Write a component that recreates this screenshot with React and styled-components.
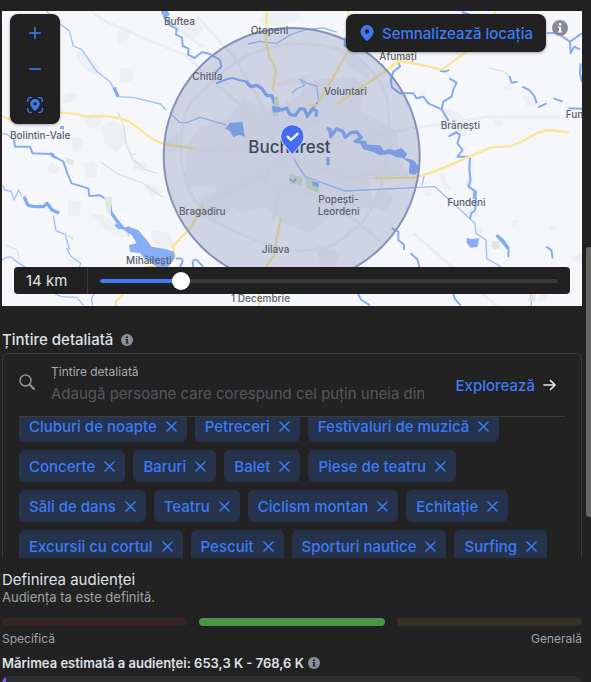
import React, { useState } from "react";
import styled, { createGlobalStyle } from "styled-components";

const Global = createGlobalStyle`
  * { box-sizing: border-box; }
  body {
    margin: 0;
    background: #222222;
    color: #dfe1e5;
    font-family: Inter, "Liberation Sans", sans-serif;
  }
  button, input { font: inherit; }
`;

const Page = styled.div`
  display: flex;
  height: 100vh;
  overflow: hidden;
`;

const Content = styled.main`
  flex: 1;
  min-width: 0;
  padding: 11px 4px 0 2px;
`;

const ScrollRail = styled.div`
  width: 5px;
  display: grid;
  grid-template-rows: 247fr 270fr 165fr;
`;

const ScrollThumb = styled.div`
  grid-row: 2;
  background: #666667;
  border-radius: 3px 0 0 3px;
`;

const MapFrame = styled.section`
  position: relative;
  height: 295px;
  overflow: hidden;
  background: #f6f7fa;
`;

const MapDrawing = styled.svg`
  display: block;
  width: 100%;
  height: 100%;
  font-family: Inter, sans-serif;
`;

const ZoomPanel = styled.div`
  position: absolute;
  top: 3px;
  left: 8px;
  display: flex;
  flex-direction: column;
  width: 50px;
  padding: 1px 0;
  border-radius: 8px;
  background: #212121;
  box-shadow: 0 1px 3px rgba(0, 0, 0, 0.35);
`;

const ZoomButton = styled.button`
  display: grid;
  place-items: center;
  height: 36px;
  padding: 0;
  border: 0;
  background: none;
  color: #3d7bf7;
`;

const MapActions = styled.div`
  position: absolute;
  top: 3px;
  right: 14px;
  display: flex;
  gap: 6px;
`;

const PinButton = styled.button`
  display: flex;
  align-items: center;
  gap: 7px;
  height: 38px;
  padding: 0 13px;
  border: 0;
  border-radius: 8px;
  background: #212121;
  color: #3d7bf7;
  font-size: 15px;
  font-weight: 500;
  white-space: nowrap;
  box-shadow: 0 1px 3px rgba(0, 0, 0, 0.35);
`;

const InfoSpot = styled.span`
  display: flex;
  padding-top: 6px;
`;

const RadiusBar = styled.div`
  position: absolute;
  left: 12px;
  right: 12px;
  bottom: 12px;
  display: flex;
  align-items: center;
  height: 27px;
  border-radius: 4px;
  background: #212121;
`;

const RadiusValue = styled.label`
  flex: none;
  width: 74px;
  padding-left: 12px;
  border-right: 1px solid #38393b;
  color: #dfe1e5;
  font-size: 15px;
  line-height: 27px;
`;

const Slider = styled.input`
  flex: 1;
  min-width: 0;
  height: 18px;
  margin: 0 12px;
  appearance: none;
  background: none;

  &::-webkit-slider-runnable-track {
    height: 4px;
    border-radius: 2px;
    background: linear-gradient(to right, #3d7bf7 var(--fill), #393a3c var(--fill));
  }
  &::-webkit-slider-thumb {
    appearance: none;
    width: 18px;
    height: 18px;
    margin-top: -7px;
    border-radius: 50%;
    background: #ffffff;
  }
`;

const Heading = styled.h2`
  display: flex;
  align-items: center;
  gap: 8px;
  margin: 0;
  padding: 24px 0 3px;
  font-size: 15px;
  font-weight: 500;
  line-height: 20px;
`;

const TargetBox = styled.section`
  height: 205px;
  padding: 0 16px;
  overflow: hidden;
  border: 1px solid #393a3c;
  border-bottom: 0;
  border-radius: 6px 6px 0 0;
`;

const SearchRow = styled.div`
  display: flex;
  align-items: center;
  height: 63px;
  border-bottom: 1px solid #3c3d3f;
  color: #8f939d;
`;

const SearchIcon = styled.svg`
  flex: none;
  margin-bottom: 6px;
`;

const SearchField = styled.label`
  display: flex;
  flex: 1;
  flex-direction: column;
  min-width: 0;
  margin: 0 32px 0 16px;
  color: #a9abb0;
  font-size: 12px;
  line-height: 16px;
`;

const SearchInput = styled.input`
  width: 100%;
  height: 26px;
  padding: 0;
  border: 0;
  outline: 0;
  background: none;
  color: #dfe1e5;
  font-size: 15px;
  &::placeholder { color: #55585f; }
`;

const ExploreButton = styled.button`
  display: flex;
  align-items: center;
  gap: 8px;
  padding: 0 9px 0 0;
  border: 0;
  background: none;
  color: #3d7bf7;
  font-size: 15px;
  font-weight: 500;
`;

const TagViewport = styled.div`
  height: 141px;
  overflow: hidden;
`;

const TagList = styled.ul`
  display: flex;
  flex-wrap: wrap;
  gap: 8px;
  margin: -7px 0 0;
  padding: 0;
  list-style: none;
`;

const Tag = styled.li`
  display: flex;
  align-items: center;
  gap: 9px;
  height: 32px;
  padding: 0 10px;
  border-radius: 6px;
  background: #26334d;
  color: #3d7bf7;
  font-size: 15px;
  font-weight: 500;
  white-space: nowrap;
`;

const RemoveButton = styled.button`
  display: flex;
  padding: 0;
  border: 0;
  background: none;
  color: inherit;
`;

const Audience = styled.section`
  padding-top: 12px;
`;

const AudienceTitle = styled.h2`
  margin: 0;
  font-size: 15px;
  font-weight: 400;
  line-height: 20px;
`;

const AudienceNote = styled.p`
  margin: 0;
  color: #a0a2a7;
  font-size: 13px;
  line-height: 15px;
`;

const Meter = styled.div`
  display: grid;
  grid-template-columns: repeat(3, 1fr);
  gap: 12px;
  margin-top: 13px;
`;

const Segment = styled.span`
  height: 8px;
  border-radius: 4px;
  background: ${(p) => p.$color};
`;

const MeterLabels = styled.div`
  display: flex;
  justify-content: space-between;
  margin-top: 4px;
  color: #a0a2a7;
  font-size: 12px;
  line-height: 18px;
`;

const Estimate = styled.p`
  display: flex;
  align-items: center;
  gap: 4px;
  margin: 6px 0 4px;
  font-size: 13px;
  font-weight: 600;
  line-height: 18px;
`;

const NextPanel = styled.div`
  height: 48px;
  border-radius: 8px;
  background: linear-gradient(to right, #8a5cf5 4px, #2e2f31 4px);
`;

function InfoIcon({ size = 12, color = "#8b8f9c" }) {
  return (
    <svg width={size} height={size} viewBox="0 0 12 12" aria-hidden="true">
      <circle cx="6" cy="6" r="6" fill={color} />
      <path d="M5 2.4h2v1.7H5zM4.5 5h2.4v3.4h.8v1H4.4v-1h.9V6h-.8z" fill={size > 12 ? "#f4f5f8" : "#222"} />
    </svg>
  );
}

function CrossIcon() {
  return (
    <svg width="11" height="11" viewBox="0 0 11 11" aria-hidden="true">
      <path d="M1 1l9 9M10 1l-9 9" stroke="currentColor" strokeWidth="1.5" strokeLinecap="round" />
    </svg>
  );
}

const pinPath = "M8 0a6.5 6.5 0 0 0-6.5 6.5C1.5 10 4.5 12.8 7.1 15.6q.9.8 1.8 0C11.5 12.8 14.5 10 14.5 6.5A6.5 6.5 0 0 0 8 0zm0 4.2a2.300 2.300 0 1 1 0 4.600 2.300 2.300 0 0 1 0-4.600z";

const urban = [
  "M355 92l22 2 14 8-10 20-16 12-14-10zM362 205h26l14 12-4 22-20 12-20-14zM228 160l22-6 24 22 26 28-8 22-28-14-24-20zM250 350l36-10 22 14-12 24-30 10zM300 378l42-16 30 22 8 46-34 26-32-28zM190 284l22-8 20 12-18 18-26 6zM215 410l34 6-4 36-26 4zM250 490l28-6 16 14-6 34-30 4zM205 600l40 8-6 42-36-4zM265 640l48 6 34 26 30 40-28-4-40-24zM150 485l32 16-16 22-26-10zM200 780l34-10 16 12-32 14zM510 60h76l26 30-30 24-48-24zM425 550l40 6 22 22-28 12zM400 480l40 10-10 28-30-8zM450 690l60 10 14 40-20 10-40-14z",
  "M788 34h110v24l-80 24-42-16zM1260 272l20-4-8 18-18 4zM1510 260l20-6 4 16-20 4zM1568 290l34-6 14 30-32 10zM1325 322l50 14 28 30-8 46-34-22-36-36zM1482 360l24-4 4 20-24 4zM1270 570l22-4 4 20-20 4zM1314 518l20 10 20 44-20-4zM1385 602l36 2 16 46-38-2zM1430 680l20 2-6 20-18-4zM1534 658l22 4v18l-20 4zM1650 674l16 6v12l-16-2zM1716 768l30-10v36l-28-12zM1620 880l26 6-10 22-20-6z",
];
const city = "M560 440L600 380L690 350L730 290L800 330L880 300L940 240L1060 230L1100 260L1080 330L1190 390L1200 500L1110 540L1120 620L1000 640L930 700L850 670L800 620L720 640L640 560L560 560z";
const suburbs = "M600 590L660 570L700 620L650 670L590 650zM950 740L1020 754L1000 814L960 800zM830 250L930 220L920 245L830 262zM1010 150L1090 190L1110 240L1050 200zM1160 490L1210 490L1230 530L1150 525zM1150 560L1180 590L1160 640L1120 620zM640 380L700 370L710 400L660 420zM500 420L540 400L530 450L500 460z";
const roads = [
  "M272 30q24 26 60 40l140 62 80 30 66 60 70 30M590 48l110 120 60 100 100 180M500 60q60 50 110 80M860 300l18 60 2 110",
  "M552 350q10-40 70-90 70-70 130-96 100-50 246-22 80 26 104 58 44 40 60 100 14 100-4 180-20 160-110 220-60 60-180 50-100-20-230-90-40-30-70-90-40-80-16-220",
  "M727 446l20-44 90-16 50 0 80-24M580 450l148-3 120-6M860 470l-80 60-160 78M850 454l-60 90M880 480v90M860 450l50 70M880 480h66l8 20-8 40M860 548l120 56 90 60 70 60M850 454l-140-150-60-50M950 500l90 34 200-14M944 354l-90 100M1110 410l130-26 90-12 134-22h282M840 560l-20 100M1240 700l140 120 110 98",
];
const yellow = [
  "M6 348l30 14M180 338q40 0 80 12 50-4 84 2c70 8 80 60 148 80l94 14M348 918v-14l26-26M436 802l62-10 27-22-7-30 56-60 36-66",
  "M800 33l-2 90 10 50q20 20 18 50l-8 50M1045 33v120l-90 156M1230 163l-220 150M1400 155l-74 54-42-10-40-8-50-8-20 16M1480 44l8-10M1122 536l120-4q50-10 120-42l110-48 60-4c60-18 70-46 120-48l56 8M796 802l26-34 10-60 10-54M778 918v-40M922 315h30",
];
const rivers = [
  "M140 33L180 72L208 92L220 138L245 148L290 214L330 245L354 290L398 292L440 302L482 312L498 330M6 400L20 402L42 420M8 555L14 570L34 574L42 600L56 570L66 588M6 780Q30 760 46 782L76 802M200 744L212 768L242 790L238 802M165 882L185 890L230 892L250 916M278 916Q270 890 284 882M160 646L168 692L196 704L208 750",
  "M744 132L780 124L830 130L872 104L920 88L970 84L1010 96M510 340L540 368L560 368L600 352L680 375M875 280L895 264L914 256L900 238L922 250L950 258L956 304M880 475L915 530L1035 573L1305 560L1425 670L1428 700L1458 720L1460 775L1502 800M1274 520L1266 556M1594 882v36",
];
const streams = [
  "M42 420L45 440L90 440L98 460L150 462L190 485L202 520L215 550L265 565L268 588L300 586L330 605L335 640L350 660L370 686L390 682",
  "M490 46L510 76L530 86L528 104L546 112L548 138L566 146L564 164L584 174L606 156L630 162L660 180L664 200L650 214L644 226M648 250L680 238L698 234L716 240L736 244L752 260L770 256L786 266L800 286L816 288L828 320M1036 112L1034 136L1046 146M956 304L936 326L920 354",
  "M1195 185L1200 200L1180 215L1172 240L1176 262L1200 280L1240 280L1250 295L1270 290L1285 310L1325 328L1345 362M1348 235L1370 248L1360 268L1355 290L1330 305L1325 328M1370 398L1348 408L1368 396L1380 405L1372 430L1388 450L1372 470L1410 470L1408 510L1412 540L1405 560L1428 575L1426 630L1414 640L1410 658",
  "M1528 228L1535 248L1553 245M1567 260L1588 270L1604 290L1610 310M1615 322L1640 310M1660 295L1688 305M1705 325L1746 326M1640 100L1670 98L1710 125L1712 160L1722 140L1740 148M1710 125L1746 100M1742 190L1740 220L1746 246M1385 36L1410 44M1175 685L1195 695L1195 720L1212 734L1212 750M1232 760L1252 778L1258 800M1490 705L1510 720L1526 745L1525 772M1638 740L1654 750L1658 775M1360 882L1364 896L1382 916M1074 882L1084 900L1110 916M580 800Q574 776 590 780L600 790L610 800M528 776Q560 770 540 800M1320 212Q1334 218 1348 210",
];
const wideStreams = "M738 244L752 260L770 256L786 266L800 286L816 288L828 322L846 330L860 324L870 344L886 346L900 326L914 328L922 348L938 326L950 334L948 350M980 385L990 388L992 410L1010 386L1028 394L1036 412L1052 398L1070 396L1084 412L1066 424L1100 428M72 590L84 616L104 620L130 620L142 610L156 630L178 640M335 640L350 662L370 686M342 262L354 290M1490 705L1525 745M984 472V496";
const lakes = [
  "M484 33h20l6 12-14 8-12-12zM390 682L415 690L440 720L455 740L500 748L522 755L525 775L505 800L470 800L430 772L420 760L390 755L387 735L410 730L395 705L370 690zM342 676L356 668L370 686L356 688zM676 386L690 368L728 366L732 396L736 410L716 404L700 412L690 394zM816 318L838 322L842 336L818 338zM1400 713l12 4 26-2-6 26-20 2-12-14zM1420 568l8 4v26l-10-2zM150 456l12 4 4 18-12-8zM180 378h12v10h-12z",
  "M1080 430L1110 434L1140 436L1152 452L1170 446L1182 452L1204 444L1222 462L1214 474L1240 480L1256 500L1258 514L1244 524L1226 520L1230 490L1208 474L1190 472L1170 462L1140 466L1120 456L1090 448z",
];
const labels = [
  ["Buftea", 492, 75], ["Bolintin-Vale", 30, 418], ["Otopeni", 752, 102], ["Chitila", 577, 239],
  ["Voluntari", 972, 286], ["Afumați", 1138, 181], ["Brănești", 1322, 387], ["Fun", 1697, 354],
  ["Bragadiru", 537, 644], ["Popești-", 955, 609], ["Leordeni", 953, 645], ["Jilava", 785, 758],
  ["Fundeni", 1342, 617], ["Mihăilești", 378, 791], ["1 Decembrie", 693, 905],
];

function CityMap() {
  return (
    <MapDrawing viewBox="6 33 1740 885" preserveAspectRatio="xMidYMid slice" role="img" aria-label="Bucharest">
      <g fill="#eceff3">
        {urban.map((d) => <path key={d} d={d} />)}
        <path d={city} />
        <path d={suburbs} />
      </g>
      <g fill="none" strokeLinejoin="round">
        {roads.map((d) => <path key={d} d={d} stroke="#e2e4e9" strokeWidth="7" />)}
        {roads.map((d) => <path key={d} d={d} stroke="#f5f6fa" strokeWidth="3" />)}
        <path d="M354 336L372 380L380 440L396 464L410 462M386 450L400 482L414 490L434 508L470 520M304 488L354 522L430 550L488 592M20 736L52 750L58 776M1466 204L1510 214L1528 228M1534 42L1560 52M1408 488L1412 520L1400 556" stroke="#d4e4de" strokeWidth="4" />
        {rivers.map((d) => <path key={d} d={d} stroke="#9fbff8" strokeWidth="4" />)}
        {streams.map((d) => <path key={d} d={d} stroke="#83abf5" strokeWidth="6" />)}
        <path d={wideStreams} stroke="#83abf5" strokeWidth="10" />
        {yellow.map((d) => <path key={d} d={d} stroke="#fae596" strokeWidth="7" />)}
      </g>
      <g fill="#dce8e1">
        <path d="M312 592l24 0-4 50-12-6zM194 472l28 8-2 16-22-4zM378 690l14 4-4 20-10-8zM1478 724l20 0 4 20-20 6-8-12zM1586 884h22l-2 18-20 2zM200 706l20 2-2 16z" />
        <path d="M824 290l10 0 4 30-18 0zM818 338h18v8l-18 4zM866 520l42 12-2 24-34-6zM918 534l38 10 0 34-36-14z" fill="#d0e5c5" />
      </g>
      <g fill="#86adf6">
        {lakes.map((d) => <path key={d} d={d} />)}
        <path d="M870 534l8 8 10-8 2 8-10 6-12-8zM936 544l20 4 0 14-18-6z" />
      </g>
      <circle cx="875" cy="468" r="384" fill="rgb(90,107,162)" fillOpacity=".25" stroke="#8492bb" strokeWidth="6" />
      <g fill="#5b606c" fontSize="30" fontWeight="500">
        {labels.map(([name, x, y]) => <text key={name} x={x} y={y}>{name}</text>)}
        <text x="745" y="459" fontSize="51" fill="#414756">Bucharest</text>
      </g>
      <path d="M877 374a35 35 0 0 0-35 35c0 20 14 28 24 42l8 10q3 3 6 0l8-10c10-14 24-22 24-42a35 35 0 0 0-35-35z" fill="#456bf5" stroke="#dfe5fa" strokeWidth="3" />
      <path d="M863 410l10 10 20-19" fill="none" stroke="#fff" strokeWidth="7" strokeLinecap="round" strokeLinejoin="round" />
    </MapDrawing>
  );
}

const interests = [
  "Cluburi de noapte", "Petreceri", "Festivaluri de muzică", "Concerte", "Baruri", "Balet",
  "Piese de teatru", "Săli de dans", "Teatru", "Ciclism montan", "Echitație",
  "Excursii cu cortul", "Pescuit", "Sporturi nautice", "Surfing",
];

const MIN_KM = 1;
const MAX_KM = 80;

export default function App() {
  const [radius, setRadius] = useState(14);
  const [tags, setTags] = useState(interests);
  const fill = `${((radius - MIN_KM) / (MAX_KM - MIN_KM)) * 100}%`;

  return (
    <Page>
      <Global />
      <Content>
        <MapFrame>
          <CityMap />
          <ZoomPanel>
            <ZoomButton aria-label="Mărește">
              <svg width="12" height="12" viewBox="0 0 12 12"><path d="M6 .5v11M.5 6h11" stroke="currentColor" strokeWidth="1.5" strokeLinecap="round" /></svg>
            </ZoomButton>
            <ZoomButton aria-label="Micșorează">
              <svg width="12" height="12" viewBox="0 0 12 12"><path d="M.5 6h11" stroke="currentColor" strokeWidth="1.5" strokeLinecap="round" /></svg>
            </ZoomButton>
            <ZoomButton aria-label="Locația mea">
              <svg width="16" height="16" viewBox="0 0 16 16">
                <path d="M.7 4.5V3A2.3 2.3 0 0 1 3 .7h1.5M11.5.7H13A2.3 2.3 0 0 1 15.3 3v1.5M15.3 11.5V13a2.3 2.3 0 0 1-2.3 2.3h-1.5M4.5 15.3H3A2.3 2.3 0 0 1 .7 13v-1.5" fill="none" stroke="currentColor" strokeWidth="1.3" strokeLinecap="round" />
                <path transform="translate(2.1 2) scale(.74)" d={pinPath} fill="currentColor" fillRule="evenodd" />
              </svg>
            </ZoomButton>
          </ZoomPanel>
          <MapActions>
            <PinButton>
              <svg width="16" height="16" viewBox="0 0 16 16" aria-hidden="true"><path d={pinPath} fill="currentColor" fillRule="evenodd" /></svg>
              Semnalizează locația
            </PinButton>
            <InfoSpot><InfoIcon size={16} color="#858997" /></InfoSpot>
          </MapActions>
          <RadiusBar>
            <RadiusValue htmlFor="radius">{radius} km</RadiusValue>
            <Slider
              id="radius"
              type="range"
              min={MIN_KM}
              max={MAX_KM}
              value={radius}
              onChange={(e) => setRadius(Number(e.target.value))}
              style={{ "--fill": fill }}
            />
          </RadiusBar>
        </MapFrame>

        <Heading>Țintire detaliată <InfoIcon /></Heading>
        <TargetBox>
          <SearchRow>
            <SearchIcon width="16" height="16" viewBox="0 0 16 16" aria-hidden="true">
              <path d="M10.8 10.8L15 15" stroke="currentColor" strokeWidth="2.2" strokeLinecap="round" />
              <circle cx="6.5" cy="6.5" r="5.5" fill="none" stroke="currentColor" strokeWidth="1.5" />
            </SearchIcon>
            <SearchField>
              Țintire detaliată
              <SearchInput placeholder="Adaugă persoane care corespund cel puțin uneia dintre" />
            </SearchField>
            <ExploreButton>
              Explorează
              <svg width="13" height="12" viewBox="0 0 13 12" aria-hidden="true">
                <path d="M1 6h11M7.5 1.5L12 6l-4.5 4.5" fill="none" stroke="#e4e6eb" strokeWidth="1.7" strokeLinecap="round" strokeLinejoin="round" />
              </svg>
            </ExploreButton>
          </SearchRow>
          <TagViewport>
            <TagList>
              {tags.map((tag) => (
                <Tag key={tag}>
                  {tag}
                  <RemoveButton aria-label={`Elimină ${tag}`} onClick={() => setTags(tags.filter((t) => t !== tag))}>
                    <CrossIcon />
                  </RemoveButton>
                </Tag>
              ))}
            </TagList>
          </TagViewport>
        </TargetBox>

        <Audience>
          <AudienceTitle>Definirea audienței</AudienceTitle>
          <AudienceNote>Audiența ta este definită.</AudienceNote>
          <Meter>
            <Segment $color="#362626" />
            <Segment $color="#4a9648" />
            <Segment $color="#383025" />
          </Meter>
          <MeterLabels>
            <span>Specifică</span>
            <span>Generală</span>
          </MeterLabels>
          <Estimate>Mărimea estimată a audienței: 653,3 K - 768,6 K <InfoIcon /></Estimate>
          <NextPanel />
        </Audience>
      </Content>
      <ScrollRail><ScrollThumb /></ScrollRail>
    </Page>
  );
}
